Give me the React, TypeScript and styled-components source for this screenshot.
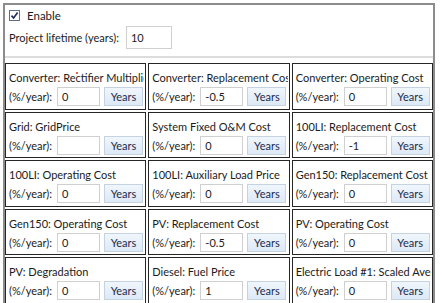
import React from 'react';
import styled, { createGlobalStyle } from 'styled-components';

const GlobalStyle = createGlobalStyle`
  html, body {
    margin: 0;
    padding: 0;
    background: #ffffff;
    overflow: hidden;
  }
  body {
    font-family: Lato, "Noto Sans", sans-serif;
    font-size: 11px;
    color: #1b1b1b;
  }
`;

const Page = styled.div`
  width: 442px;
  height: 303px;
  padding: 3px 0 0 3px;
  box-sizing: border-box;
  overflow: hidden;
`;

const Frame = styled.div`
  width: 432px;
  box-sizing: border-box;
  border: 2px solid #8c8c8c;
  border-bottom: none;
  height: 320px;
`;

const Header = styled.div`
  padding: 3px 4px 0 4px;
`;

const CheckRow = styled.label`
  display: flex;
  align-items: center;
  gap: 7px;
  height: 14px;
  font-size: 11.5px;
`;

const CheckBox = styled.span`
  width: 11px;
  height: 11px;
  box-sizing: border-box;
  border: 1px solid #5a6f8a;
  background: #fdfdff;
  display: flex;
  align-items: center;
  justify-content: center;
`;

const LifetimeRow = styled.div`
  display: flex;
  align-items: center;
  gap: 7px;
  margin-top: 4px;
  height: 23px;
`;

const LifetimeLabel = styled.span`
  white-space: nowrap;
`;

const TextBox = styled.div<{ $w: number; $h: number }>`
  width: ${(p) => p.$w}px;
  height: ${(p) => p.$h}px;
  flex: none;
  box-sizing: border-box;
  border: 1px solid #d0d0d0;
  background: #fff;
  padding-left: 4px;
  display: flex;
  align-items: center;
`;

const Divider = styled.div`
  height: 2px;
  background: #dcdcdc;
  margin-top: 7px;
`;

const Grid = styled.div`
  display: grid;
  grid-template-columns: repeat(3, 1fr);
  grid-auto-rows: 46.5px;
  gap: 2px;
  margin-top: 5px;
`;

const Cell = styled.div`
  position: relative;
  min-width: 0;
  border: 1px solid #262626;
  padding: 6px 1px 0 3px;
  overflow: hidden;
`;

const Title = styled.div`
  line-height: 16px;
  white-space: nowrap;
  overflow: hidden;
`;

const InputRow = styled.div`
  display: flex;
  align-items: center;
  margin-top: 1px;
`;

const RateLabel = styled.span`
  width: 48px;
  flex: none;
  white-space: nowrap;
`;

const YearsButton = styled.button`
  width: 39px;
  height: 19px;
  flex: none;
  margin-left: 4px;
  padding: 0;
  box-sizing: border-box;
  border: 1px solid #c5d2e2;
  background: linear-gradient(#f0f6fc, #dde9f6);
  color: #1c2a4a;
  font: inherit;
  display: flex;
  align-items: center;
  justify-content: center;
`;

const RedDot = styled.span`
  position: absolute;
  left: 70px;
  top: 8px;
  width: 2px;
  height: 2px;
  border-radius: 1px;
  background: #e0312b;
`;

type Item = { title: string; value: string };

const items: Item[] = [
  { title: 'Converter: Rectifier Multiplier', value: '0' },
  { title: 'Converter: Replacement Cost', value: '-0.5' },
  { title: 'Converter: Operating Cost', value: '0' },
  { title: 'Grid: GridPrice', value: '' },
  { title: 'System Fixed O&M Cost', value: '0' },
  { title: '100LI: Replacement Cost', value: '-1' },
  { title: '100LI: Operating Cost', value: '0' },
  { title: '100LI: Auxiliary Load Price', value: '0' },
  { title: 'Gen150: Replacement Cost', value: '0' },
  { title: 'Gen150: Operating Cost', value: '0' },
  { title: 'PV: Replacement Cost', value: '-0.5' },
  { title: 'PV: Operating Cost', value: '0' },
  { title: 'PV: Degradation', value: '0' },
  { title: 'Diesel: Fuel Price', value: '1' },
  { title: 'Electric Load #1: Scaled Average', value: '0' },
];

const App: React.FC = () => (
  <Page>
    <GlobalStyle />
    <Frame>
      <Header>
        <CheckRow>
          <CheckBox>
            <svg width="9" height="9" viewBox="0 0 9 9">
              <path d="M1.5 4.6 L3.6 7 L7.6 1.6" fill="none" stroke="#1d2a55" strokeWidth="1.6" />
            </svg>
          </CheckBox>
          Enable
        </CheckRow>
        <LifetimeRow>
          <LifetimeLabel>Project lifetime (years):</LifetimeLabel>
          <TextBox $w={46} $h={23}>10</TextBox>
        </LifetimeRow>
      </Header>
      <Divider />
      <Grid>
        {items.map((it, i) => (
          <Cell key={i}>
            {i === 0 && <RedDot />}
            <Title>{it.title}</Title>
            <InputRow>
              <RateLabel>(%/year):</RateLabel>
              <TextBox $w={43} $h={19}>{it.value}</TextBox>
              <YearsButton>Years</YearsButton>
            </InputRow>
          </Cell>
        ))}
      </Grid>
    </Frame>
  </Page>
);

export default App;
